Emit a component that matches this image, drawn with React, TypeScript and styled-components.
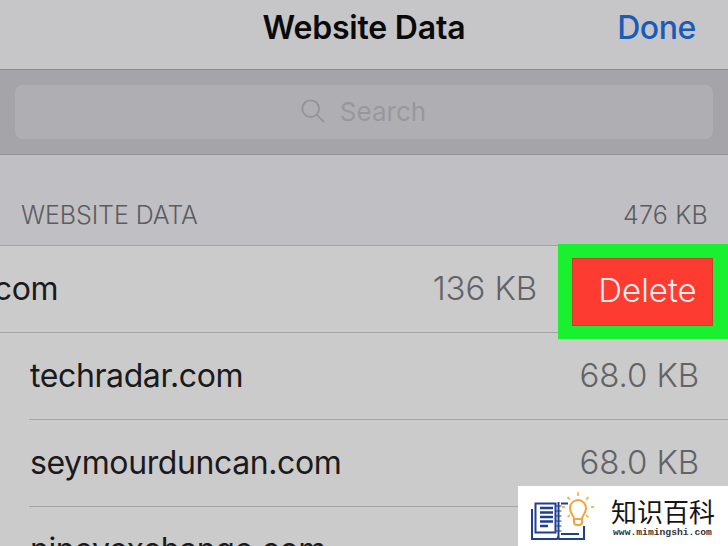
import React from "react";
import styled, { createGlobalStyle } from "styled-components";

const Global = createGlobalStyle`
  html, body {
    margin: 0;
    padding: 0;
    overflow: hidden;
  }
  body {
    font-family: "Inter", "Liberation Sans", sans-serif;
  }
`;

const Screen = styled.div`
  position: relative;
  width: 728px;
  height: 546px;
  overflow: hidden;
  background: #cbcbcc;
`;

const NavBar = styled.div`
  height: 69px;
  display: flex;
  align-items: center;
  justify-content: center;
  position: relative;
  background: #c6c6c8;
  border-bottom: 1px solid #8c8c8e;
  box-sizing: content-box;
`;

const Title = styled.div`
  font-size: 32px;
  font-weight: 600;
  letter-spacing: -0.2px;
  color: #0a0a0a;
  margin-top: -15px;
`;

const DoneButton = styled.div`
  position: absolute;
  right: 32px;
  top: 8px;
  font-size: 32px;
  font-weight: 500;
  letter-spacing: -0.4px;
  color: #1a5bb8;
`;

const SearchBand = styled.div`
  height: 85px;
  padding: 15px 15px 15px;
  box-sizing: border-box;
  background: #a5a5a9;
  border-bottom: 1px solid #939397;
`;

const SearchField = styled.div`
  height: 54px;
  padding: 0 2px 2px 0;
  box-sizing: border-box;
  border-radius: 8px;
  background: #afafb3;
  display: flex;
  align-items: center;
  justify-content: center;
  gap: 14px;
  color: #98989c;
  font-size: 26px;
`;

const SectionHeader = styled.div`
  height: 91px;
  padding: 0 20px 15px 21px;
  box-sizing: border-box;
  display: flex;
  align-items: flex-end;
  justify-content: space-between;
  background: #c0c0c4;
  border-bottom: 1px solid #a3a3a6;
  color: #5c5c60;
  font-size: 25px;
  font-weight: 300;
  line-height: 30px;
`;

const HeaderLabel = styled.span`
  letter-spacing: -0.1px;
`;

const HeaderTotal = styled.span`
  letter-spacing: 0.2px;
`;

const Row = styled.div`
  height: 87px;
  margin-left: 29px;
  padding: 0 29px 2px 0;
  box-sizing: border-box;
  display: flex;
  align-items: center;
  justify-content: space-between;
  border-bottom: 1px solid #a4a4a7;
`;

const FirstRow = styled(Row)`
  margin-left: 0;
  padding-right: 191px;
`;

const SiteName = styled.span<{ $shift?: number }>`
  font-size: 32px;
  font-weight: 400;
  letter-spacing: -0.4px;
  color: #1a1a1c;
  margin-left: ${(p) => p.$shift ?? 1}px;
`;

const Size = styled.span`
  font-size: 33px;
  font-weight: 300;
  letter-spacing: -0.1px;
  color: #636367;
`;

const Highlight = styled.div`
  position: absolute;
  left: 558px;
  top: 244px;
  width: 170px;
  height: 95px;
  padding: 14px 15px 13px 14px;
  box-sizing: border-box;
  background: #19f02f;
`;

const DeleteButton = styled.div`
  height: 100%;
  display: flex;
  align-items: center;
  justify-content: center;
  padding: 0 0 4px 10px;
  box-sizing: border-box;
  background: #fe3b30;
  box-shadow: inset 0 0 0 1px #c9402c;
  color: #f8eeee;
  font-size: 33px;
  font-weight: 300;
`;

const Watermark = styled.div`
  position: absolute;
  right: 0;
  bottom: 0;
  width: 210px;
  height: 60px;
  background: #fff;
  display: flex;
  align-items: center;
  padding-left: 13px;
  gap: 14px;
  box-sizing: border-box;
`;

const BrandText = styled.div`
  display: flex;
  flex-direction: column;
`;

const BrandName = styled.div`
  font-family: "Noto Sans CJK SC", sans-serif;
  font-size: 26px;
  line-height: 32px;
  color: #151515;
`;

const BrandUrl = styled.div`
  font-family: "Liberation Mono", monospace;
  font-size: 9.7px;
  font-weight: 700;
  line-height: 11px;
  margin-left: 2px;
  color: #333;
`;

const SearchIcon = () => (
  <svg width="26" height="26" viewBox="0 0 28 28" fill="none" stroke="#949498" strokeWidth="2">
    <circle cx="11.5" cy="11.5" r="9" />
    <path d="M18 18l8 8" />
  </svg>
);

const LogoIcon = () => (
  <svg width="66" height="50" viewBox="0 0 66 50" fill="none">
    <path d="M1 18v30h25l1-1.500 1 1.500h25V35" stroke="#1f3f8f" strokeWidth="2" />
    <path d="M4.500 12.500h20v29h-20z" stroke="#1f3f8f" strokeWidth="2" />
    <path d="M9 17h13M9 21.500h13M9 26h13M9 30.500h13M9 35h8" stroke="#1f3f8f" strokeWidth="2.400" />
    <path d="M27.500 11v36M30 12.500h7M30 43h18" stroke="#1f3f8f" strokeWidth="2" />
    <path d="M24.500 15h6M24.500 20h6M24.500 25h6M24.500 30h6M24.500 35h6M24.500 40h6" stroke="#1f3f8f" strokeWidth="1.200" />
    <path d="M43 28c0-4-4-5-4-11a8 8 0 0 1 16 0c0 6-4 7-4 11z" stroke="#f2a33d" strokeWidth="2" />
    <path d="M43 28v3a3 3 0 0 0 3 3h2a3 3 0 0 0 3-3v-3" stroke="#f2a33d" strokeWidth="2" />
    <path d="M47 1v4M34 16h-3M60 16h3M36.500 6l2.500 2.500M57.500 6L55 8.500M36.500 26l2.500-2M57.500 26L55 24" stroke="#f5b947" strokeWidth="1.800" />
  </svg>
);

const sites = [
  { name: "techradar.com", size: "68.0 KB" },
  { name: "seymourduncan.com", size: "68.0 KB" },
  { name: "ninevexchange.com", size: "" },
];

const App = (): JSX.Element => (
  <Screen>
    <Global />
    <NavBar>
      <Title>Website Data</Title>
      <DoneButton>Done</DoneButton>
    </NavBar>
    <SearchBand>
      <SearchField>
        <SearchIcon />
        <span>Search</span>
      </SearchField>
    </SearchBand>
    <SectionHeader>
      <HeaderLabel>WEBSITE DATA</HeaderLabel>
      <HeaderTotal>476 KB</HeaderTotal>
    </SectionHeader>
    <FirstRow>
      <SiteName $shift={-15}>.com</SiteName>
      <Size>136 KB</Size>
    </FirstRow>
    {sites.map((site) => (
      <Row key={site.name}>
        <SiteName>{site.name}</SiteName>
        <Size>{site.size}</Size>
      </Row>
    ))}
    <Highlight>
      <DeleteButton>Delete</DeleteButton>
    </Highlight>
    <Watermark>
      <LogoIcon />
      <BrandText>
        <BrandName>知识百科</BrandName>
        <BrandUrl>www.mimingshi.com</BrandUrl>
      </BrandText>
    </Watermark>
  </Screen>
);

export default App;
